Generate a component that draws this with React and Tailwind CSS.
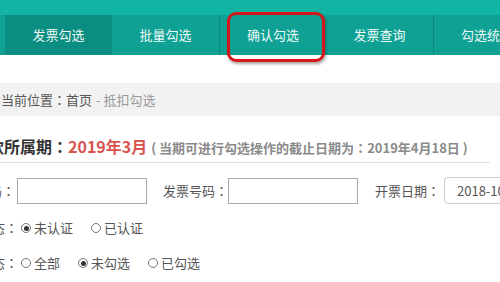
const TABS = ["发票勾选", "批量勾选", "确认勾选", "发票查询", "勾选统计"];

// centred full-width colon, like the Windows UI font
function Colon() {
  return <span className="font-['Noto_Sans_CJK_TC',sans-serif]">：</span>;
}

function Radio({ checked }) {
  return (
    <span className="flex items-center justify-center w-[10px] h-[10px] rounded-full border border-[#777] bg-white">
      {checked && <span className="w-[5px] h-[5px] rounded-full bg-[#333]" />}
    </span>
  );
}

function RadioGroup({ label, options }) {
  return (
    <div className="flex items-center h-[20px] -ml-[47px] text-[13px] leading-[20px] text-[#555] whitespace-nowrap">
      <span className="shrink-0 w-[65px] text-right">
        {label}
        <Colon />
      </span>
      <div className="flex items-center ml-[3px]">
        {options.map((o, i) => (
          <label key={o.text} className={`flex items-center gap-[3px] ${i > 0 ? "ml-[18px]" : ""}`}>
            <Radio checked={o.checked} />
            <span>{o.text}</span>
          </label>
        ))}
      </div>
    </div>
  );
}

export default function App() {
  return (
    <div className="relative w-[500px] h-[282px] overflow-hidden bg-white font-['Noto_Sans_CJK_SC',sans-serif]">
      {/* top nav */}
      <div className="h-[15px] bg-[#12b4a6]" />
      <div className="flex h-[40px] bg-[#0fa294] pl-[5px]">
        {TABS.map((t, i) => (
          <div
            key={t}
            className={`shrink-0 w-[107px] flex items-center justify-center text-[13px] text-white/95 ${
              i === 0 ? "bg-[#0b8e82]" : ""
            } ${i === 2 || i === 4 ? "border-l border-[#0a8a7e]" : ""}`}
          >
            {t}
          </div>
        ))}
      </div>
      {/* highlight */}
      <div className="absolute left-[227px] top-[12px] w-[98px] h-[50px] rounded-[9px] border-[3px] border-[#d4161b] shadow-[1px_2px_3px_rgba(0,0,0,0.35)]" />

      {/* breadcrumb */}
      <div className="mt-[28px] h-[33px] bg-[#f2f2f2] flex items-center pl-[1px] text-[13px] text-[#555]">
        当前位置<Colon />首页<span className="text-[#999] ml-[4px]">- 抵扣勾选</span>
      </div>

      {/* title */}
      <div className="mt-[14px] h-[33px] w-[518px] border-b border-[#ddd] flex items-center -ml-[28px]">
        <div className="flex items-baseline whitespace-nowrap">
          <span className="text-[16px] font-bold text-[#333]">
            税款所属期<Colon />
          </span>
          <span className="text-[16px] font-bold text-[#d9534f]">2019年3月</span>
          <span className="ml-[4px] text-[13px] font-bold text-[#8a8a8a]">
            ( 当期可进行勾选操作的截止日期为<Colon />2019年4月18日 )
          </span>
        </div>
      </div>

      {/* search row */}
      <div className="mt-[14px] -ml-[50px] flex items-center text-[13px] text-[#555] whitespace-nowrap">
        <span className="shrink-0 w-[65px] text-right">
          发票代码<Colon />
        </span>
        <input className="shrink-0 ml-[2px] w-[130px] h-[26px] border border-[#aaa] outline-none" />
        <span className="shrink-0 ml-[16px] w-[65px]">
          发票号码<Colon />
        </span>
        <input className="shrink-0 w-[130px] h-[26px] border border-[#aaa] outline-none" />
        <span className="shrink-0 ml-[17px] w-[65px]">
          开票日期<Colon />
        </span>
        <div className="shrink-0 ml-[4px] w-[120px] h-[27px] rounded-[4px] border border-[#ccc] flex items-center px-[12px] text-[#555]">
          2018-10-01
        </div>
      </div>

      <div className="mt-[14px]">
        <RadioGroup
          label="认证状态"
          options={[
            { text: "未认证", checked: true },
            { text: "已认证", checked: false },
          ]}
        />
      </div>
      <div className="mt-[15px]">
        <RadioGroup
          label="勾选状态"
          options={[
            { text: "全部", checked: false },
            { text: "未勾选", checked: true },
            { text: "已勾选", checked: false },
          ]}
        />
      </div>
    </div>
  );
}
